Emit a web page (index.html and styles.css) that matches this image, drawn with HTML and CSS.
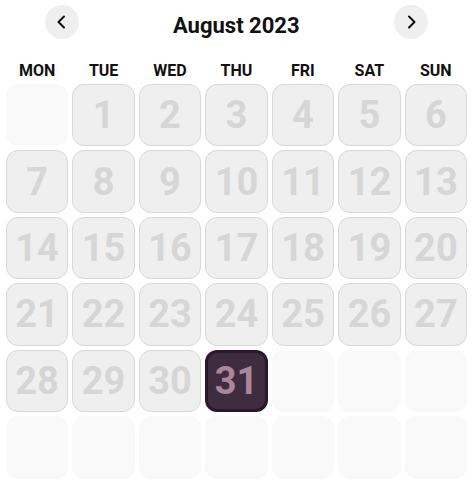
FILE: index.html
```html
<!DOCTYPE html>
<html lang="en">
<head>
    <meta charset="UTF-8">
    <meta name="viewport" content="width=device-width, initial-scale=1.0">
    <title>Calendar</title>
    <link rel="stylesheet" href="styles.css">
</head>
<body>
    <div class="calendar">
        <div class="header">
            <button class="nav" type="button" aria-label="Previous month">
                <svg width="16" height="16" viewBox="0 0 16 16"><path d="M10 2.5 L4.5 8 L10 13.5" fill="none" stroke="#111" stroke-width="2" stroke-linecap="round" stroke-linejoin="round"/></svg>
            </button>
            <h1 class="title">August 2023</h1>
            <button class="nav" type="button" aria-label="Next month">
                <svg width="16" height="16" viewBox="0 0 16 16"><path d="M6 2.5 L11.5 8 L6 13.5" fill="none" stroke="#111" stroke-width="2" stroke-linecap="round" stroke-linejoin="round"/></svg>
            </button>
        </div>
        <div class="weekdays">
            <span>MON</span><span>TUE</span><span>WED</span><span>THU</span><span>FRI</span><span>SAT</span><span>SUN</span>
        </div>
        <div class="days" id="days"></div>
    </div>

    <script>
        const days = document.getElementById("days");
        const offset = 1;
        const total = 31;
        const selected = 31;

        for (let i = 0; i < 42; i++) {
            const cell = document.createElement("div");
            const day = i - offset + 1;
            if (day < 1 || day > total) {
                cell.className = "day empty";
            } else {
                cell.className = day === selected ? "day selected" : "day";
                cell.textContent = day;
            }
            days.appendChild(cell);
        }
    </script>
</body>
</html>
```

FILE: styles.css
```css
body {
    font-family: Roboto, "Liberation Sans", sans-serif;
    background-color: #fff;
    margin: 0;
    padding: 0;
}

.calendar {
    padding: 0 6px;
}

.header {
    display: flex;
    align-items: center;
    justify-content: space-between;
    height: 44px;
    padding: 0 39px 0 38.5px;
}

.nav {
    width: 34px;
    height: 34px;
    border: none;
    border-radius: 50%;
    background-color: #efefef;
    display: flex;
    align-items: center;
    justify-content: center;
    padding: 0;
    cursor: pointer;
}

.title {
    margin: 7px 0 0;
    font-size: 22px;
    font-weight: bold;
    color: #111;
}

.weekdays {
    display: grid;
    grid-template-columns: repeat(7, 1fr);
    gap: 4px;
    box-sizing: border-box;
    height: 40px;
    padding-top: 12px;
    align-items: center;
    text-align: center;
    font-size: 16px;
    font-weight: bold;
    color: #111;
}

.days {
    display: grid;
    grid-template-columns: repeat(7, 1fr);
    gap: 4.3px;
}

.day {
    aspect-ratio: 1;
    box-sizing: border-box;
    display: flex;
    align-items: center;
    justify-content: center;
    background-color: #efefef;
    border: 1px solid #d8d8d8;
    border-radius: 12px;
    font-size: 38px;
    font-weight: bold;
    color: #d6d6d6;
}

.day.empty {
    background-color: #f9f9f9;
    border-color: #f9f9f9;
}

.day.selected {
    background-color: #3f2c3f;
    border: 3px solid #2a192a;
    color: #a9869b;
}
```
